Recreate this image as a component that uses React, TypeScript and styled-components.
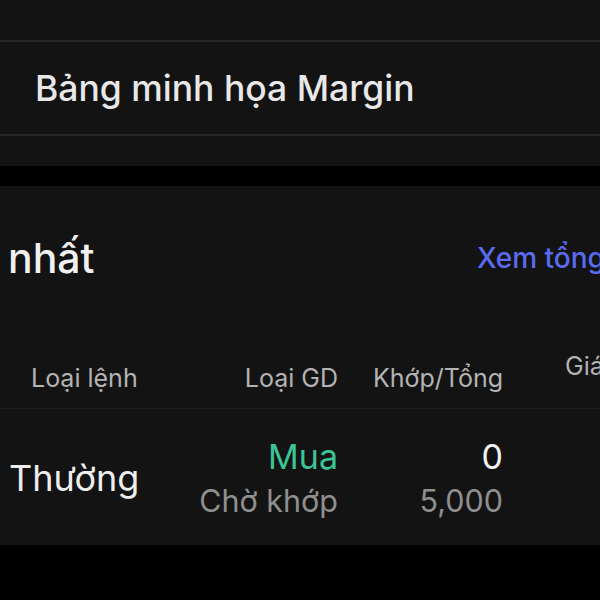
import React from "react";
import styled, { createGlobalStyle } from "styled-components";

const GlobalStyle = createGlobalStyle`
  body {
    margin: 0;
    background: #000;
    font-family: Inter, "Noto Sans", "Liberation Sans", sans-serif;
    overflow: hidden;
  }
`;

const Page = styled.div`
  width: 600px;
  display: flex;
  flex-direction: column;
  overflow: hidden;
`;

const MenuPanel = styled.section`
  background: #131313;
  padding: 40px 0 30px;
`;

const Divider = styled.div`
  height: 2px;
  background: #262626;
`;

const MenuItem = styled.div`
  height: 92px;
  display: flex;
  align-items: center;
  padding-left: 35px;
  font-size: 35.5px;
  font-weight: 500;
  color: #e8e8e8;
`;

const Card = styled.section`
  margin-top: 20px;
  background: #131313;
  padding-top: 47px;
`;

const TitleRow = styled.div`
  display: grid;
  grid-template-columns: 469px max-content;
  align-items: center;
  padding-left: 8px;
  white-space: nowrap;
`;

const Title = styled.h2`
  margin: 0;
  font-size: 41px;
  line-height: 50px;
  font-weight: 500;
  color: #f0f0f0;
`;

const LinkText = styled.a`
  font-size: 28px;
  font-weight: 500;
  color: #5b6bf0;
  text-decoration: none;
`;

const TableRow = styled.div<{ $head?: boolean }>`
  display: grid;
  grid-template-columns: 170px 168px 165px max-content;
  white-space: nowrap;
  ${(p) =>
    p.$head
      ? `
    padding: 68px 0 15px;
    grid-auto-rows: 42px;
    align-items: end;
    border-bottom: 1px solid #1c1c1c;
  `
      : `
    height: 136px;
    align-items: center;
    padding-top: 2px;
    box-sizing: border-box;
  `}
`;

const HeadCell = styled.div<{ $align?: "left" | "right"; $inset?: number; $top?: boolean }>`
  font-size: 25px;
  line-height: 30px;
  color: #b3b3b3;
  text-align: ${(p) => p.$align ?? "right"};
  padding-left: ${(p) => p.$inset ?? 0}px;
  align-self: ${(p) => (p.$top ? "start" : "end")};
`;

const OrderType = styled.div`
  padding-left: 9px;
  font-size: 36px;
  line-height: 42px;
  color: #ededed;
`;

const Stack = styled.div`
  display: flex;
  flex-direction: column;
  align-items: flex-end;
  gap: 6px;
`;

const MainValue = styled.span<{ $tone?: "buy" | "plain" }>`
  font-size: 34px;
  line-height: 40px;
  color: ${(p) => (p.$tone === "buy" ? "#3bc495" : "#f2f2f2")};
`;

const SubValue = styled.span`
  font-size: 30.5px;
  line-height: 36px;
  color: #8f8f8f;
`;

const App = () => {
  return (
    <>
      <GlobalStyle />
      <Page>
        <MenuPanel>
          <Divider />
          <MenuItem>Bảng minh họa Margin</MenuItem>
          <Divider />
        </MenuPanel>

        <Card>
          <TitleRow>
            <Title>nhất</Title>
            <LinkText>Xem tổng hợp</LinkText>
          </TitleRow>

          <TableRow $head>
            <HeadCell $align="left" $inset={31}>
              Loại lệnh
            </HeadCell>
            <HeadCell>Loại GD</HeadCell>
            <HeadCell>Khớp/Tổng</HeadCell>
            <HeadCell $align="left" $inset={62} $top>
              Giá đặt
            </HeadCell>
          </TableRow>

          <TableRow>
            <OrderType>Thường</OrderType>
            <Stack>
              <MainValue $tone="buy">Mua</MainValue>
              <SubValue>Chờ khớp</SubValue>
            </Stack>
            <Stack>
              <MainValue>0</MainValue>
              <SubValue>5,000</SubValue>
            </Stack>
          </TableRow>
        </Card>
      </Page>
    </>
  );
};

export default App;
